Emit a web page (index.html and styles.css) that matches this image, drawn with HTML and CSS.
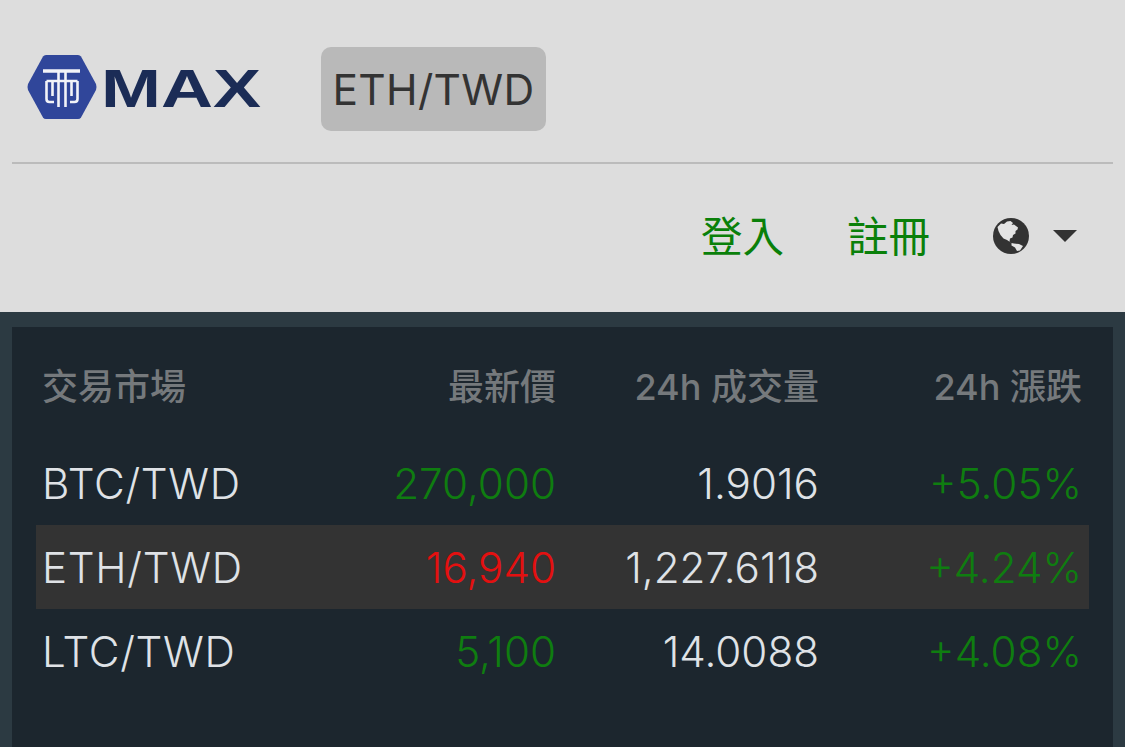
FILE: index.html
```html
<!DOCTYPE html>
<html lang="zh-Hant">
<head>
    <meta charset="UTF-8">
    <title>MAX ETH/TWD</title>
    <link rel="stylesheet" href="styles.css">
</head>
<body>
    <header class="top">
        <div class="brand-row">
            <svg class="logo" width="234" height="64" viewBox="0 0 234 64">
                <path d="M16 1.500Q17 0 19 0H51Q53 0 54 1.500L69 29Q70 32 69 35L54 62.500Q53 64 51 64H19Q17 64 16 62.500L1 35Q0 32 1 29Z" fill="#30469a"/>
                <path d="M16 16H53" fill="none" stroke="#f2f3f8" stroke-width="3.600"/>
                <path d="M19.500 26H50.500M31.500 16V52M38.500 16V52M19.500 26V44Q19.500 47 22.500 47H27M50.500 26V44Q50.500 47 47.500 47H43M25.500 26V41M44.500 26V41" fill="none" stroke="#f2f3f8" stroke-width="2.600"/>
                <text class="logo-text" x="74" y="52" textLength="160" lengthAdjust="spacingAndGlyphs">MAX</text>
            </svg>
            <span class="market-btn">ETH/TWD</span>
        </div>
        <nav class="nav-row">
            <a class="nav-link">登入</a>
            <a class="nav-link">註冊</a>
            <span class="lang">
                <svg width="36" height="36" viewBox="0 0 36 36">
                    <circle cx="18" cy="18" r="18" fill="#333"/>
                    <path d="M4.500 9L8 5.500L11 6L14 3.500L17.500 3L20 5L18.500 7L21 6.500L25 9.500L24.500 11.500L22.500 13L22.500 15.500L20 17L19.500 19.500L17 20.500L16.500 23.500L18.500 25L14 22L10.500 20.500L7.500 17L5.500 13ZM18.500 25L21 25.500L26 26L30 28L27 32.500L24 33L22 29.500L18.500 27.500Z" fill="#e4e4e4"/>
                </svg>
                <i class="caret"></i>
            </span>
        </nav>
    </header>

    <main class="board">
        <section class="panel">
            <div class="row head">
                <div>交易市場</div>
                <div class="num">最新價</div>
                <div class="num">24h 成交量</div>
                <div class="num">24h 漲跌</div>
            </div>
            <div class="row">
                <div class="pair">BTC/TWD</div>
                <div class="num up">270,000</div>
                <div class="num">1.9016</div>
                <div class="num up">+5.05%</div>
            </div>
            <div class="row active">
                <div class="pair">ETH/TWD</div>
                <div class="num down">16,940</div>
                <div class="num">1,227.6118</div>
                <div class="num up">+4.24%</div>
            </div>
            <div class="row">
                <div class="pair">LTC/TWD</div>
                <div class="num up">5,100</div>
                <div class="num">14.0088</div>
                <div class="num up">+4.08%</div>
            </div>
        </section>
    </main>
</body>
</html>
```

FILE: styles.css
```css
html, body {
    height: 100%;
}

body {
    margin: 0;
    background: #2c3a42;
    font-family: Inter, "Noto Sans CJK TC", sans-serif;
    overflow: hidden;
}

.top {
    height: 312px;
    background: #dddddd;
    padding: 0 12px;
}

.brand-row {
    height: 84px;
    padding: 47px 0 31px;
    display: flex;
    align-items: flex-start;
    border-bottom: 2px solid #bbbbbb;
}

.logo {
    margin: 8px 0 0 15px;
}

.logo-text {
    font-family: "Liberation Sans", sans-serif;
    font-weight: 700;
    font-size: 54px;
    fill: #1b2c56;
}

.market-btn {
    margin-left: 60px;
    width: 225px;
    height: 84px;
    display: flex;
    align-items: center;
    justify-content: center;
    background: #b9b9b9;
    border-radius: 10px;
    color: #333333;
    font-size: 42.500px;
    letter-spacing: 0.300px;
    font-weight: 400;
}

.nav-row {
    display: flex;
    justify-content: flex-end;
    align-items: center;
    padding: 43px 36px 0 0;
    height: 54px;
}

.nav-link {
    color: #0a800a;
    font-family: "Noto Sans CJK TC", sans-serif;
    font-weight: 400;
    font-size: 41.500px;
    line-height: 54px;
    margin-right: 63px;
}

.lang {
    display: flex;
    align-items: center;
    padding-top: 3px;
}

.caret {
    margin-left: 24px;
    width: 0;
    height: 0;
    border-left: 12px solid transparent;
    border-right: 12px solid transparent;
    border-top: 12px solid #333333;
}

.board {
    padding: 15px 12px 0;
}

.panel {
    height: 420px;
    background: #1c262e;
    padding: 0 24px;
}

.row {
    display: grid;
    grid-template-columns: 251px 263px 263px 263px;
    align-items: center;
    height: 84px;
    padding-left: 6px;
    color: #dfe2e6;
    font-weight: 300;
    font-size: 42.200px;
}

.row.head {
    height: 114px;
    color: #75797c;
    font-size: 36px;
    font-weight: 500;
}

.row.active {
    background: #333333;
}

.pair {
    letter-spacing: 0.700px;
}

.num {
    text-align: right;
}

.up {
    color: #0f7d10;
}

.down {
    color: #e41010;
}
```
